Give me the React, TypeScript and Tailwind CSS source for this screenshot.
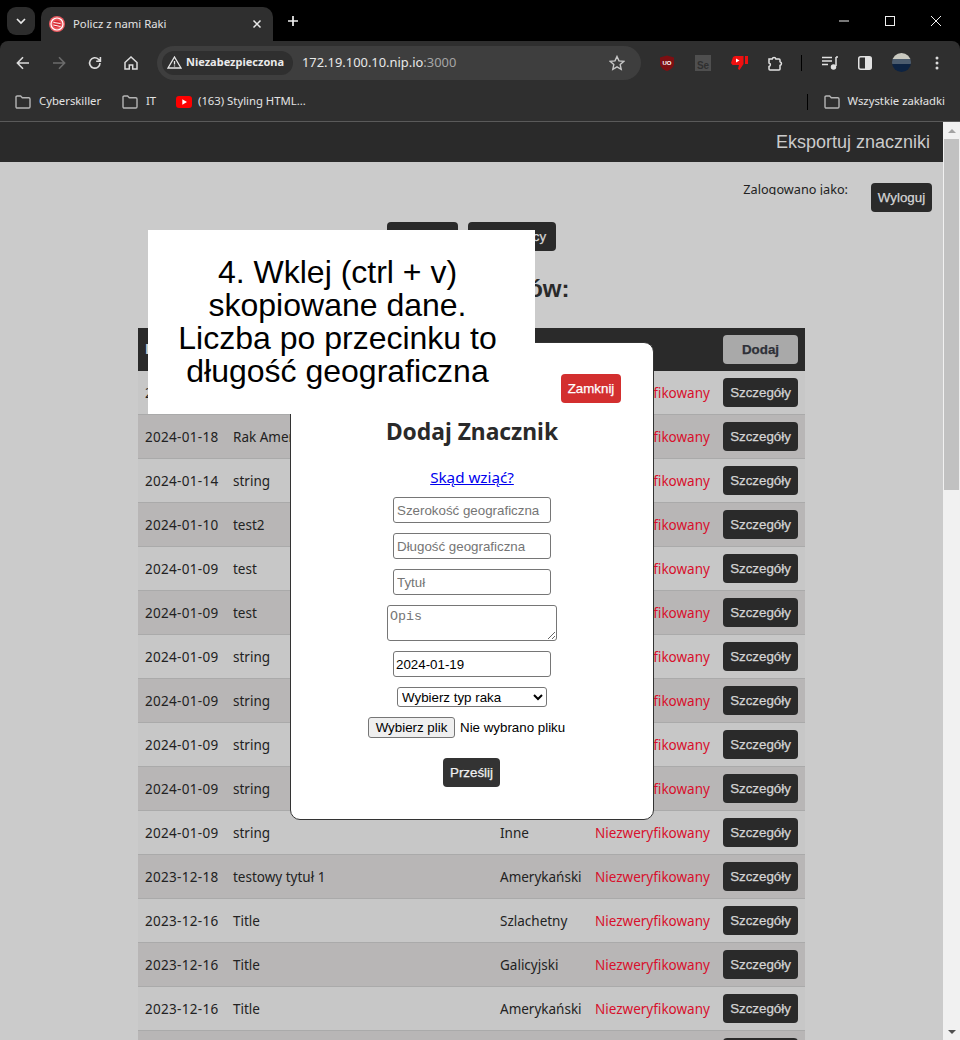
import React from "react";

const sans = "font-['Liberation_Sans',Arial,sans-serif]";
const seg = "font-['Noto_Sans','Open_Sans',sans-serif]";

function Folder({ className = "" }: { className?: string }) {
  return (
    <svg width="16" height="14" viewBox="0 0 16 14" fill="none" stroke="#b5b5b5" strokeWidth="1.4" className={className}>
      <path d="M1 2.2c0-.7.5-1.2 1.2-1.2h3.4l1.7 1.8h6.5c.7 0 1.2.5 1.2 1.2v7.8c0 .7-.5 1.2-1.2 1.2H2.2c-.7 0-1.2-.5-1.2-1.2z" />
    </svg>
  );
}

function TabBar() {
  return (
    <div className="h-[41px] bg-black flex items-end shrink-0 relative">
      <div className="ml-[7px] mb-[6px] w-[28px] h-[28px] rounded-[9px] bg-[#2d2d2d] flex items-center justify-center">
        <svg width="10" height="7" viewBox="0 0 10 7" fill="none" stroke="#e8e8e8" strokeWidth="1.7"><path d="M1 1l4 4 4-4" /></svg>
      </div>
      <div className="ml-[6px] w-[232px] h-[34px] bg-[#2f2f2f] rounded-t-[10px] flex items-center pl-[8px] pr-[11px]">
        <svg width="16" height="16" viewBox="0 0 16 16" className="shrink-0">
          <circle cx="8" cy="8" r="8" fill="#ea5a60" />
          <circle cx="8" cy="8" r="6" fill="none" stroke="#fff" strokeWidth="1.2" />
          <circle cx="8" cy="8" r="3.6" fill="#d8242c" />
          <path d="M4.500 6.500l7 1M4.500 9l7 1.500" stroke="#fff" strokeWidth="1" />
        </svg>
        <span className={`ml-[8px] text-[11.300px] text-[#e3e3e3] flex-1 ${seg}`}>Policz z nami Raki</span>
        <svg width="10" height="10" viewBox="0 0 10 10" stroke="#e8e8e8" strokeWidth="1.5"><path d="M1.500 1.500l7 7M8.500 1.500l-7 7" /></svg>
      </div>
      <div className="ml-[14px] mb-[14px] w-[12px] h-[12px] flex items-center justify-center">
        <svg width="12" height="12" viewBox="0 0 12 12" stroke="#f0f0f0" strokeWidth="1.700"><path d="M6 1v10M1 6h10" /></svg>
      </div>
      <div className="ml-auto mb-[15px] mr-[19px] flex items-center gap-[36px]">
        <svg width="10" height="10" viewBox="0 0 10 10" stroke="#f0f0f0" strokeWidth="1"><path d="M0 5h10" /></svg>
        <svg width="10" height="10" viewBox="0 0 10 10" fill="none" stroke="#f0f0f0" strokeWidth="1"><rect x=".5" y=".5" width="9" height="9" /></svg>
        <svg width="10" height="10" viewBox="0 0 10 10" stroke="#f0f0f0" strokeWidth="1"><path d="M0 0l10 10M10 0L0 10" /></svg>
      </div>
    </div>
  );
}

function Toolbar() {
  return (
    <div className="h-[43px] flex items-center bg-[#2f2f2f] rounded-t-[8px] shrink-0 relative">
      <svg width="14" height="14" viewBox="0 0 14 14" fill="none" stroke="#dcdcdc" strokeWidth="1.600" className="ml-[16px]"><path d="M13 7H1.500M7 1.300L1.400 7 7 12.700" /></svg>
      <svg width="14" height="14" viewBox="0 0 14 14" fill="none" stroke="#6c6c6c" strokeWidth="1.600" className="ml-[22px]"><path d="M1 7h11.500M7 1.300L12.600 7 7 12.700" /></svg>
      <svg width="14" height="14" viewBox="0 0 14 14" fill="none" stroke="#dcdcdc" strokeWidth="1.600" className="ml-[22px]"><path d="M12 7a5.200 5.200 0 1 1-1.500-3.700L12.300 5M12.400 1v4.200H8.200" /></svg>
      <svg width="14" height="14" viewBox="0 0 14 14" fill="none" stroke="#dcdcdc" strokeWidth="1.500" className="ml-[22px]"><path d="M1 6.500L7 1l6 5.500V13H8.700V9H5.300v4H1z" /></svg>
      <div className="ml-[19px] w-[484px] h-[34px] rounded-full bg-[#3e3e3e] flex items-center pl-[5px] pr-[16px]">
        <div className="h-[24px] w-[131px] rounded-full bg-[#2f2f2f] flex items-center pl-[5px] shrink-0">
          <svg width="15" height="13" viewBox="0 0 15 13" fill="none" stroke="#e6e6e6" strokeWidth="1.300" className="shrink-0"><path d="M7.500 1L14 12H1z" /><path d="M7.500 5v3.400M7.500 9.400v1" /></svg>
          <span className={`ml-[4px] text-[11px] font-bold text-[#eaeaea] whitespace-nowrap ${seg}`}>Niezabezpieczona</span>
        </div>
        <span className={`ml-[9px] text-[12.900px] text-[#e8e8e8] ${seg}`}>172.19.100.10.nip.io<span className="text-[#a5a5a5]">:3000</span></span>
        <svg width="16" height="16" viewBox="0 0 16 16" fill="none" stroke="#c8c8c8" strokeWidth="1.400" className="ml-auto"><path d="M8 1.500l2 4.400 4.700.5-3.500 3.200 1 4.700L8 11.900l-4.200 2.400 1-4.700L1.300 6.400 6 5.900z" /></svg>
      </div>
      <svg width="14" height="16" viewBox="0 0 14 16" className="ml-[19px]">
        <path d="M7 .5L14 2.500v6c0 3.500-3 6-7 7.500-4-1.500-7-4-7-7.500v-6z" fill="#7d0f12" />
        <text x="7" y="9.500" textAnchor="middle" fontSize="6" fontWeight="700" fill="#fff" fontFamily="Liberation Sans">UO</text>
      </svg>
      <div className="ml-[21px] w-[16px] h-[16px] bg-[#4f4f4f] flex items-end justify-center">
        <span className={`text-[10px] leading-[11px] text-[#2f2f2f] font-bold ${sans}`}>Se</span>
      </div>
      <svg width="17" height="16" viewBox="0 0 17 16" className="ml-[20px]">
        <path d="M4 1h8.500v8L8.500 15 7 14l1-4H1.500L0 8l2-6z" fill="#f01010" />
        <path d="M14 1h3v8h-3z" fill="#f01010" />
        <path d="M5 3.500l3.500 2-3.500 2z" fill="#fff" />
      </svg>
      <svg width="16" height="16" viewBox="0 0 16 16" fill="none" stroke="#e2e2e2" strokeWidth="1.500" className="ml-[20px]">
        <path d="M1 4h3.200a1.900 1.900 0 0 1 3.700 0H11a1 1 0 0 1 1 1v1.700a1.900 1.900 0 0 1 0 3.700V14a1 1 0 0 1-1 1H2a1 1 0 0 1-1-1v-2.500a1.800 1.800 0 0 0 0-3.500z" />
      </svg>
      <div className="ml-[17px] w-[1px] h-[16px] bg-black" />
      <svg width="16" height="14" viewBox="0 0 16 14" fill="none" stroke="#e2e2e2" strokeWidth="1.500" className="ml-[20px]">
        <path d="M0 1.500h10M0 5h10M0 8.500h6" /><path d="M14 1v9" /><path d="M14 1h2" /><circle cx="11.500" cy="11" r="2" fill="#e2e2e2" />
      </svg>
      <svg width="14" height="14" viewBox="0 0 14 14" className="ml-[20px]">
        <rect x=".75" y=".75" width="12.500" height="12.500" rx="2" fill="none" stroke="#e2e2e2" strokeWidth="1.500" />
        <path d="M7 1h5a1 1 0 0 1 1 1v10a1 1 0 0 1-1 1H7z" fill="#e2e2e2" />
      </svg>
      <div className="ml-[20px] w-[19px] h-[19px] rounded-full overflow-hidden flex flex-col">
        <div className="h-[6px] bg-[#c9c9c0]" />
        <div className="h-[5px] bg-[#4c5c6e]" />
        <div className="flex-1 bg-[#0d2342]" />
      </div>
      <svg width="4" height="14" viewBox="0 0 4 14" fill="#dcdcdc" className="ml-[24px]"><circle cx="2" cy="2" r="1.500" /><circle cx="2" cy="7" r="1.500" /><circle cx="2" cy="12" r="1.500" /></svg>
    </div>
  );
}

function Bookmarks() {
  const t = `text-[11.300px] text-[#e3e3e3] whitespace-nowrap ${seg}`;
  return (
    <div className="h-[38px] bg-[#2f2f2f] border-b border-[#5a5a5a] flex items-center shrink-0 pl-[15px] pb-[2px]">
      <Folder />
      <span className={`ml-[8px] w-[61px] ${t}`}>Cyberskiller</span>
      <Folder className="ml-[22px]" />
      <span className={`ml-[8px] w-[10px] ${t}`}>IT</span>
      <svg width="16" height="12" viewBox="0 0 16 12" className="ml-[20px]"><rect width="16" height="12" rx="3" fill="#f00" /><path d="M6.300 3.300L11 6l-4.700 2.700z" fill="#fff" /></svg>
      <span className={`ml-[6px] ${t}`}>(163) Styling HTML...</span>
      <div className="ml-auto w-[1px] h-[16px] bg-black" />
      <Folder className="ml-[16px]" />
      <span className={`ml-[8px] mr-[15px] ${t}`}>Wszystkie zakładki</span>
    </div>
  );
}

const rows: [string, string, string][] = [
  ["2024-01-19", "Rak", "Inne"],
  ["2024-01-18", "Rak Amerykański", "Amerykański"],
  ["2024-01-14", "string", "Inne"],
  ["2024-01-10", "test2", "Inne"],
  ["2024-01-09", "test", "Inne"],
  ["2024-01-09", "test", "Inne"],
  ["2024-01-09", "string", "Inne"],
  ["2024-01-09", "string", "Inne"],
  ["2024-01-09", "string", "Inne"],
  ["2024-01-09", "string", "Inne"],
  ["2024-01-09", "string", "Inne"],
  ["2023-12-18", "testowy tytuł 1", "Amerykański"],
  ["2023-12-16", "Title", "Szlachetny"],
  ["2023-12-16", "Title", "Galicyjski"],
  ["2023-12-16", "Title", "Amerykański"],
  ["2023-12-16", "Title", "Inne"],
];

const darkBtn = `bg-[#2a2a2a] text-[#d4d4d4] rounded-[4px] h-[29px] text-[13.333px] [-webkit-text-stroke:0.25px] ${sans}`;
const cell = "h-[44px] border-b border-[#aaaaaa]";

function Table() {
  return (
    <table className={`w-[667px] table-fixed border-separate border-spacing-0 mx-auto ${seg} text-[13.500px] text-[#222]`}>
      <colgroup>
        <col className="w-[88px]" />
        <col className="w-[267px]" />
        <col className="w-[95px]" />
        <col className="w-[135px]" />
        <col className="w-[82px]" />
      </colgroup>
      <thead>
        <tr className="h-[43px] bg-[#2a2a2a] text-[#cfcfcf] text-left">
          <th className="pl-[7px] font-bold">Data</th>
          <th className="pl-[7px] font-bold">Tytuł</th>
          <th className="pl-[7px] font-bold">Typ</th>
          <th className="pl-[7px] font-bold">Status</th>
          <th>
            <button className={`w-[75px] h-[29px] rounded-[4px] bg-[#a9a9a9] text-[#2e3038] text-[13.333px] [-webkit-text-stroke:0.25px] ${sans}`}>Dodaj</button>
          </th>
        </tr>
      </thead>
      <tbody>
        {rows.map((r, i) => (
          <tr key={i} className={i % 2 ? "bg-[#b8b6b6]" : "bg-[#c7c7c7]"}>
            <td className={`${cell} pt-[2px] pl-[7px] tracking-[0.3px]`}>{r[0]}</td>
            <td className={`${cell} pt-[2px] pl-[7px]`}>{r[1]}</td>
            <td className={`${cell} pt-[2px] pl-[7px]`}>{r[2]}</td>
            <td className={`${cell} pt-[2px] pl-[7px] text-[#d8102c]`}>Niezweryfikowany</td>
            <td className={cell}>
              <button className={`w-[75px] align-middle ${darkBtn}`}>Szczegóły</button>
            </td>
          </tr>
        ))}
      </tbody>
    </table>
  );
}

function Scrollbar() {
  return (
    <div className="w-[17px] bg-[#f1f1f1] flex flex-col items-center shrink-0">
      <div className="h-[17px] flex items-center justify-center shrink-0">
        <div className="w-0 h-0 border-l-[4px] border-r-[4px] border-b-[4px] border-l-transparent border-r-transparent border-b-[#a3a3a3]" />
      </div>
      <div className="w-[15px] h-[351px] bg-[#c1c1c1]" />
      <div className="mt-auto h-[17px] flex items-center justify-center shrink-0">
        <div className="w-0 h-0 border-l-[4px] border-r-[4px] border-t-[4px] border-l-transparent border-r-transparent border-t-[#505050]" />
      </div>
    </div>
  );
}

const field = `block mx-auto w-[158px] h-[26px] border border-[#767676] rounded-[3px] text-[13.333px] text-black placeholder:text-[#757575] bg-white ${sans}`;

function Modal() {
  return (
    <div className="absolute left-[290px] top-[342px] w-[364px] h-[478px] bg-white border border-[#333] rounded-[10px] flex flex-col items-center">
      <button className={`self-end mt-[31px] mr-[32px] w-[60px] h-[29px] rounded-[4px] bg-[#d32f2f] text-white text-[13.333px] [-webkit-text-stroke:0.25px] ${sans}`}>Zamknij</button>
      <h2 className={`mt-[12px] text-[22.800px] leading-[33px] font-bold text-[#2a2a2a] ${seg}`}>Dodaj Znacznik</h2>
      <a href="#" className={`mt-[19px] text-[15.200px] leading-[21px] text-[#0000ee] underline ${seg}`}>Skąd wziąć?</a>
      <form className="w-full flex flex-col items-center mt-[9px]">
        <input className={`px-[3px] ${field}`} placeholder="Szerokość geograficzna" />
        <input className={`mt-[10px] px-[3px] ${field}`} placeholder="Długość geograficzna" />
        <input className={`mt-[10px] px-[3px] ${field}`} placeholder="Tytuł" />
        <textarea className="mt-[10px] block w-[170px] h-[36px] border border-[#767676] rounded-[3px] px-[2px] py-[3px] text-[13.333px] leading-[15px] bg-white placeholder:text-[#757575] font-['Liberation_Mono',monospace]" placeholder="Opis" />
        <input className={`mt-[10px] px-[2px] ${field}`} defaultValue="2024-01-19" />
        <select className={`mt-[10px] block w-[150px] h-[20px] border border-[#767676] rounded-[3px] text-[13.333px] bg-white text-black ${sans}`}>
          <option>Wybierz typ raka</option>
        </select>
        <div className={`mt-[10px] h-[21px] w-[208px] flex items-center text-[13.333px] text-black whitespace-nowrap ${sans}`}>
          <button type="button" className="w-[87px] h-[21px] border border-[#767676] rounded-[3px] bg-[#efefef]">Wybierz plik</button>
          <span className="ml-[5px]">Nie wybrano pliku</span>
        </div>
        <button type="button" className={`mt-[20px] mr-[1px] w-[57px] h-[29px] rounded-[4px] bg-[#333] text-[#f0f0f0] text-[13.333px] [-webkit-text-stroke:0.25px] ${sans}`}>Prześlij</button>
      </form>
    </div>
  );
}

function Page() {
  return (
    <div className="flex-1 min-w-0 bg-[#cbcbcb]">
      <div className={`h-[40px] bg-[#2a2a2a] flex items-center justify-end pr-[13px] text-[18px] text-[#cbcbcb] ${sans}`}>Eksportuj znaczniki</div>
      <div className="flex items-start justify-end pt-[21px] pr-[11px]">
        <div className={`h-[13px] -mt-[1px] overflow-hidden text-[12.700px] leading-[15px] text-[#222] ${seg}`}>Zalogowano jako:</div>
        <button className={`ml-[23px] w-[61px] ${darkBtn}`}>Wyloguj</button>
      </div>
      <div className="flex justify-center gap-[10px] mt-[10px]">
        <button className={`w-[71px] ${darkBtn}`}>Strona</button>
        <button className={`w-[88px] ${darkBtn}`}>Pracownicy</button>
      </div>
      <h1 className={`mt-[24px] pr-[8px] text-center text-[24px] leading-[28px] font-bold text-[#2a2a2a] ${sans}`}>Lista znaczników:</h1>
      <div className="mt-[25px]">
        <Table />
      </div>
    </div>
  );
}

export default function App() {
  return (
    <div className="relative w-[960px] h-[1040px] overflow-hidden flex flex-col bg-black">
      <TabBar />
      <Toolbar />
      <Bookmarks />
      <div className="flex flex-1 min-h-0 overflow-hidden">
        <Page />
        <Scrollbar />
      </div>
      <Modal />
      <div className={`absolute left-[148px] top-[230px] w-[387px] h-[184px] bg-white flex items-center justify-center pr-[8px] text-center text-[32px] leading-[33px] text-black ${sans}`}>
        <p>4. Wklej (ctrl + v)<br />skopiowane dane.<br />Liczba po przecinku to<br />długość geograficzna</p>
      </div>
    </div>
  );
}
